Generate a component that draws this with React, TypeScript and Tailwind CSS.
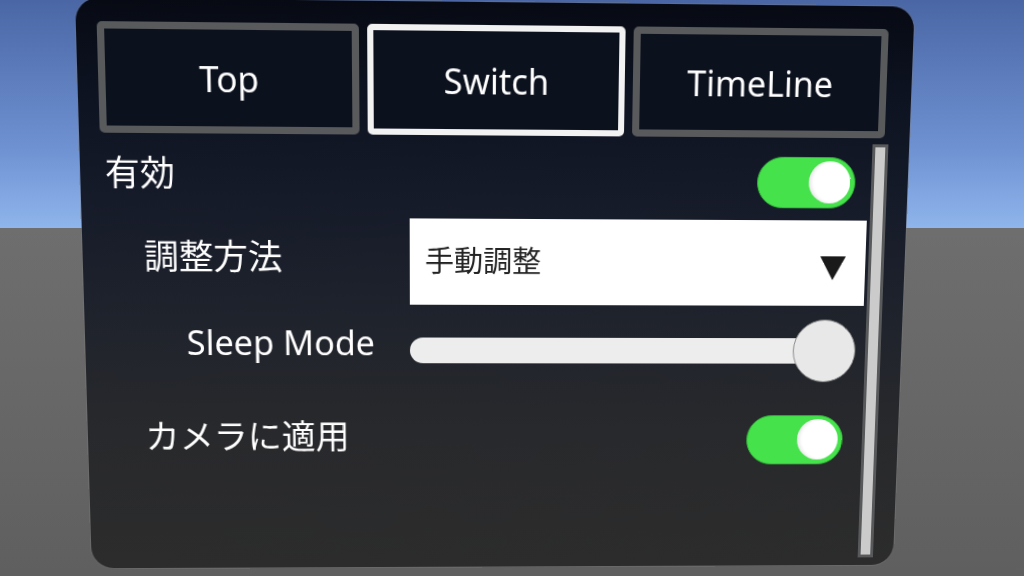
import React from "react";

function Toggle() {
  return (
    <div className="flex h-[51px] w-[99px] items-center justify-end rounded-full border border-[#34b93a] bg-[#45e24b] pr-[4px]">
      <div className="h-[42px] w-[42px] rounded-full bg-white shadow-[inset_3px_0_3px_rgba(0,0,0,0.08)]" />
    </div>
  );
}

function Tab({ label, active }: { label: string; active?: boolean }) {
  return (
    <div
      className={
        active
          ? "flex items-center justify-center rounded-[5px] border-[6px] border-[#f2f2f2] bg-[#0c111e]"
          : "flex items-center justify-center rounded-[5px] border-[7px] border-[#595a5c] bg-[#0c111e]"
      }
    >
      <span className="text-[34px] leading-none text-white">{label}</span>
    </div>
  );
}

export default function App() {
  return (
    <div className="h-[576px] w-[1024px] overflow-hidden bg-[linear-gradient(to_bottom,#4a66a5_0px,#6f92d2_150px,#8fb5ec_228px,#6e6e6e_228px,#676767_400px,#5f5f5f_576px)] pl-[88px] pt-[8px] font-['Noto_Sans','Noto_Sans_CJK_JP',sans-serif]">
      <div className="flex h-[566px] w-[820px] flex-col rounded-[22px] bg-[linear-gradient(to_bottom,#070a13_0%,#0d1220_14%,#151a29_32%,#1f232c_55%,#28292c_75%,#2c2c2c_100%)] shadow-[0_0_0_1px_rgba(120,120,120,0.35)] [transform:perspective(1000px)_rotateX(-4.8deg)_rotateY(1.5deg)_rotateZ(0.3deg)]">
        {/* tabs */}
        <div className="ml-[20px] mr-[25px] mt-[22px] grid h-[107px] grid-cols-3 gap-[8px]">
          <Tab label="Top" />
          <Tab label="Switch" active />
          <Tab label="TimeLine" />
        </div>

        <div className="mt-[6px] flex flex-1">
          {/* content */}
          <div className="flex w-[782px] flex-col">
            {/* row 1 */}
            <div className="flex h-[76px] items-center justify-between pl-[24px] pr-[15px]">
              <span className="mb-[12px] text-[34px] leading-none text-white">有効</span>
              <Toggle />
            </div>
            {/* row 2 */}
            <div className="flex h-[86px] items-center">
              <div className="w-[322px] pl-[60px]">
                <span className="mb-[10px] block text-[34px] leading-none text-white">調整方法</span>
              </div>
              <div className="flex h-[86px] w-[458px] items-center justify-between bg-white pl-[15px] pr-[20px]">
                <span className="mb-[4px] text-[29px] leading-none text-[#222222]">手動調整</span>
                <svg className="mt-[10px]" width="26" height="24" viewBox="0 0 26 24">
                  <polygon points="0,0 26,0 13,24" fill="#1a1a1a" />
                </svg>
              </div>
            </div>
            {/* row 3 */}
            <div className="flex h-[92px] items-center">
              <div className="w-[322px] pl-[100px]">
                <span className="mb-[16px] block text-[34px] leading-none text-white">Sleep Mode</span>
              </div>
              <div className="flex h-[64px] w-[451px] items-center">
                <div className="-mr-[32px] h-[26px] flex-1 rounded-full bg-[#ededed]" />
                <div className="h-[64px] w-[64px] rounded-full border border-[#8d8d8d] bg-[#e8e8e8]" />
              </div>
            </div>
            {/* row 4 */}
            <div className="flex h-[90px] items-center justify-between pl-[57px] pr-[19px]">
              <span className="mb-[9px] text-[34px] leading-none text-white">カメラに適用</span>
              <Toggle />
            </div>
          </div>
          {/* scrollbar */}
          <div className="mb-[8px] ml-[1px] w-[16px] border-[3px] border-[#58595b] bg-[#cbcbcb]" />
        </div>
      </div>
    </div>
  );
}
